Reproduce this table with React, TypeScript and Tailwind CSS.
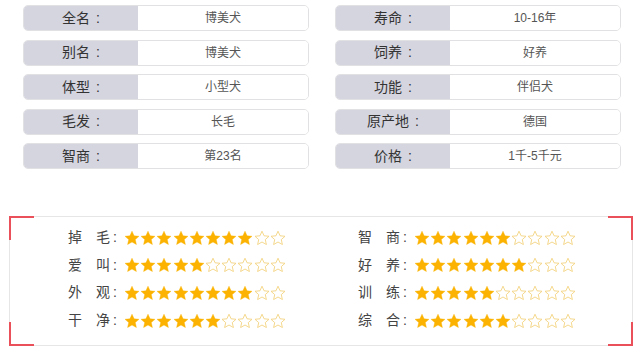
const infoLeft = [
  ["全名", "博美犬"],
  ["别名", "博美犬"],
  ["体型", "小型犬"],
  ["毛发", "长毛"],
  ["智商", "第23名"],
]

const infoRight = [
  ["寿命", "10-16年"],
  ["饲养", "好养"],
  ["功能", "伴侣犬"],
  ["原产地", "德国"],
  ["价格", "1千-5千元"],
]

const ratingsLeft: [string, string, number][] = [
  ["掉", "毛", 8],
  ["爱", "叫", 5],
  ["外", "观", 8],
  ["干", "净", 6],
]

const ratingsRight: [string, string, number][] = [
  ["智", "商", 6],
  ["好", "养", 7],
  ["训", "练", 5],
  ["综", "合", 6],
]

function Star({ filled }: { filled: boolean }) {
  return (
    <svg viewBox="0 0 24 24" className="h-[16px] w-[16px] shrink-0">
      <path
        d="M12 1.8l3.1 6.9 7.4.7-5.6 5 1.7 7.4L12 18l-6.6 3.8 1.7-7.4-5.6-5 7.4-.7z"
        fill={filled ? "#fbb200" : "none"}
        stroke={filled ? "#fbb200" : "#f2d27c"}
        strokeWidth={filled ? 0.6 : 1.3}
        strokeLinejoin="round"
      />
    </svg>
  )
}

function InfoRow({ label, value }: { label: string; value: string }) {
  return (
    <div className="flex h-[26px] overflow-hidden rounded-[5px] border border-[#e1e1e4]">
      <div className="flex w-[114px] items-center justify-center bg-[#d5d5df] pl-[4px] text-[14px] text-[#333]">
        <span>{label}</span>
        <span className="ml-[2px] w-[12px] text-center">:</span>
      </div>
      <div className="flex flex-1 items-center justify-center bg-white text-[12px] text-[#555]">
        {value}
      </div>
    </div>
  )
}

function RatingRow({ a, b, score }: { a: string; b: string; score: number }) {
  return (
    <div className="flex h-[27.6px] items-center text-[14px] text-[#444]">
      <div className="flex w-[56px] items-center">
        <span>{a}</span>
        <span className="ml-[14px]">{b}</span>
        <span className="ml-[3px]">:</span>
      </div>
      <div className="flex gap-[0.2px]">
        {Array.from({ length: 10 }, (_, i) => (
          <Star key={i} filled={i < score} />
        ))}
      </div>
    </div>
  )
}

export default function App() {
  return (
    <div
      className="h-[350px] w-[640px] overflow-hidden bg-white"
      style={{ fontFamily: '"Liberation Sans", "Noto Sans CJK SC", sans-serif' }}
    >
      <div className="flex gap-[26px] pl-[23px] pt-[5px]">
        <div className="flex w-[286px] flex-col gap-[8.5px]">
          {infoLeft.map(([l, v]) => (
            <InfoRow key={l} label={l} value={v} />
          ))}
        </div>
        <div className="flex w-[286px] flex-col gap-[8.5px]">
          {infoRight.map(([l, v]) => (
            <InfoRow key={l} label={l} value={v} />
          ))}
        </div>
      </div>

      <div className="relative ml-[9px] mt-[47px] h-[130px] w-[624px] border border-[#e6e6e6]">
        <span className="absolute -left-px -top-px h-[24px] w-[25px] border-l-2 border-t-2 border-[#e9505a]" />
        <span className="absolute -right-px -top-px h-[24px] w-[25px] border-r-2 border-t-2 border-[#e9505a]" />
        <span className="absolute -bottom-px -left-px h-[24px] w-[25px] border-b-2 border-l-2 border-[#e9505a]" />
        <span className="absolute -bottom-px -right-px h-[24px] w-[25px] border-b-2 border-r-2 border-[#e9505a]" />

        <div className="flex pl-[58px] pt-[7px]">
          <div className="flex w-[290px] flex-col">
            {ratingsLeft.map(([a, b, s]) => (
              <RatingRow key={a} a={a} b={b} score={s} />
            ))}
          </div>
          <div className="flex flex-col">
            {ratingsRight.map(([a, b, s]) => (
              <RatingRow key={a} a={a} b={b} score={s} />
            ))}
          </div>
        </div>
      </div>
    </div>
  )
}
